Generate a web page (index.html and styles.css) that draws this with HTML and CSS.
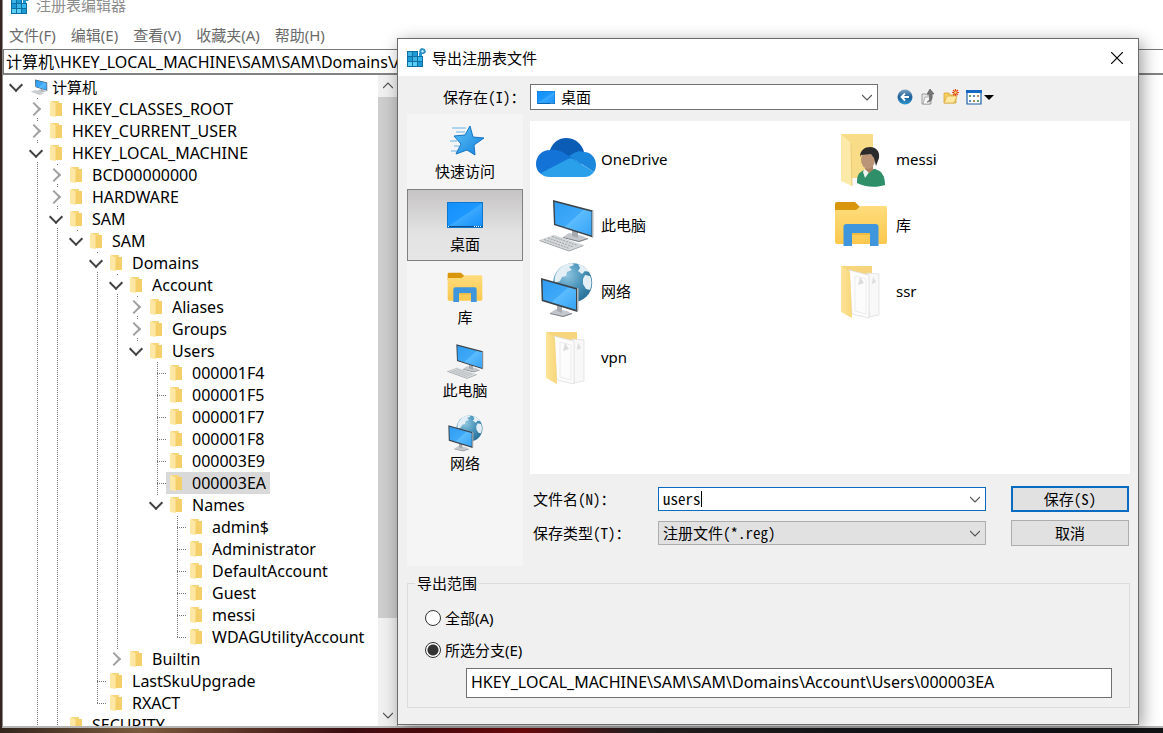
FILE: index.html
```html
<!DOCTYPE html>
<html lang="zh-CN">
<head>
<meta charset="UTF-8">
<title>注册表编辑器</title>
<link rel="stylesheet" href="styles.css">
</head>
<body>
<svg class="sprite" aria-hidden="true">
	<defs>
		<linearGradient id="g-screen" x1="0" y1="0" x2="1" y2="1">
			<stop offset="0" stop-color="#2f9df4"/>
			<stop offset=".5" stop-color="#3fa9f8"/>
			<stop offset=".52" stop-color="#5bbcff"/>
			<stop offset="1" stop-color="#36a3f5"/>
		</linearGradient>
		<linearGradient id="g-desk" x1="0" y1="0" x2="1" y2="1">
			<stop offset="0" stop-color="#1490fb"/>
			<stop offset=".5" stop-color="#1c98ff"/>
			<stop offset=".52" stop-color="#3aa8ff"/>
			<stop offset="1" stop-color="#1590fa"/>
		</linearGradient>
		<radialGradient id="g-globe" cx=".35" cy=".3" r=".8">
			<stop offset="0" stop-color="#8fc6e0"/>
			<stop offset=".5" stop-color="#4b94ba"/>
			<stop offset="1" stop-color="#246a92"/>
		</radialGradient>
		<linearGradient id="g-folder" x1="0" y1="0" x2="0" y2="1">
			<stop offset="0" stop-color="#ffdc7c"/>
			<stop offset="1" stop-color="#fcc84e"/>
		</linearGradient>
		<linearGradient id="g-flap" x1="0" y1="0" x2="1" y2="0">
			<stop offset="0" stop-color="#fde59c"/>
			<stop offset="1" stop-color="#f8d677"/>
		</linearGradient>
		<linearGradient id="g-star" x1="0" y1="0" x2="1" y2="1">
			<stop offset="0" stop-color="#5cc4f8"/>
			<stop offset="1" stop-color="#1480dc"/>
		</linearGradient>
		<linearGradient id="g-back" x1="0" y1="0" x2="0" y2="1">
			<stop offset="0" stop-color="#7fa6c4"/>
			<stop offset=".5" stop-color="#1d5f99"/>
			<stop offset="1" stop-color="#2f9ad0"/>
		</linearGradient>
	</defs>

	<symbol id="i-reg" viewBox="0 0 20 20">
		<path d="M1 3h16v16H1z" fill="#0f6fa0"/>
		<path d="M2 4h4v4H2zM7 9h4v4H7z" fill="#3fb4e4"/>
		<path d="M7 4h4v4H7zM2 9h4v4H2zM12 14h4v4h-4z" fill="#1c9ad6"/>
		<path d="M2 14h4v4H2zM7 14h4v4H7z" fill="#5ad0f6"/>
		<path d="M12 9h4v4h-4z" fill="#36b8ea"/>
		<path d="M12 2h5v6h-5z" fill="#fff"/>
		<path d="M13 5h3v3h-3z" fill="#1c9ad6"/>
		<path d="M16 0l3 1 1 3-2 2-3 0-2-2 1-3z" fill="#2c8fc2"/>
		<circle cx="16.500" cy="3.200" r="1.200" fill="#bfe8fa"/>
	</symbol>

	<symbol id="i-folder" viewBox="0 0 16 18">
		<path d="M1 1h8v2l3 0v13H1z" fill="#f7d679"/>
		<path d="M7 3h5v13H6z" fill="#f5d06a"/>
		<path d="M0 2l1-1 5 3v13l-6-1z" fill="#fde7a4"/>
		<path d="M6 4v12" stroke="#f0c558" stroke-width=".7"/>
	</symbol>

	<symbol id="i-computer" viewBox="0 0 60 60">
		<path d="M27 42l6-4 14 3 5 3-9 3z" fill="#c3c7cb"/>
		<path d="M27 42l16 4 9-3v1l-9 3-16-4z" fill="#777d83"/>
		<path d="M36 33h6v10l-6-2z" fill="#a7abaf"/>
		<path d="M17 5l40 10.400v27L18 30z" fill="#3b4248"/>
		<path d="M56 15.400l1.500.4v26l-1.500.6z" fill="#aeb3b7"/>
		<path d="M18.500 7L55.500 16.700v23.800L19.300 29z" fill="url(#g-screen)"/>
		<path d="M3.500 45L18 39.700 47.500 50 33 55.500z" fill="#d5d8da"/>
		<path d="M3.500 45L33 55.500 47.500 50v1L33 56.500 3.500 46z" fill="#9a9fa3"/>
		<path d="M8 44.500l25.500 9M12 43l25.500 9M16 41.500l25.500 9" stroke="#9ca1a5" stroke-width="1" stroke-dasharray="2 1" fill="none"/>
	</symbol>

	<symbol id="i-network" viewBox="0 0 60 60">
		<circle cx="36.700" cy="21.700" r="19.500" fill="url(#g-globe)"/>
		<path d="M21 11c4-6 10-9 15-9l2 2-5 2 3 3-5 2-1 4-4 1-2 4-5 2c-1-4 0-8 2-11zM42 3c4 1 9 4 11 8l-4-1-3 3-4-3 2-3zM49 14l5 1c2 4 2 9 0 14l-4-1-3-5 0-5z" fill="#e3eff4"/>
		<path d="M14 52l6-4 11 2 5 3-9 3z" fill="#c3c7cb"/>
		<path d="M14 52l13 3 9-3v1l-9 3-13-3z" fill="#777d83"/>
		<path d="M21 43h5v9l-5-2z" fill="#a7abaf"/>
		<path d="M5 17l36.500 10.300V51L5.700 40z" fill="#3b4248"/>
		<path d="M41 27l1.500.5V50l-1.500.8z" fill="#b4b8bb"/>
		<path d="M6.500 19L40 28.500v20.300L7.200 38.800z" fill="url(#g-screen)"/>
	</symbol>

	<symbol id="i-library" viewBox="0 0 60 60">
		<path d="M4 9a2 2 0 0 1 2-2h18l5 5-3 6H4z" fill="#d9960c"/>
		<path d="M4 15h21l5-4h24a2 2 0 0 1 2 2v34a2 2 0 0 1-2 2H6a2 2 0 0 1-2-2z" fill="url(#g-folder)"/>
		<path d="M12.500 51V32a3 3 0 0 1 3-3h29a3 3 0 0 1 3 3v19H39V38H21v13z" fill="#3f96dc"/>
		<path d="M21 38h18v2H21z" fill="#f0bb40"/>
	</symbol>

	<symbol id="i-docs" viewBox="0 0 60 60">
		<path d="M10 5h31v10H20z" fill="#f6d57c"/>
		<path d="M36 12l12 1v41l-10 2z" fill="#f8f8f8" stroke="#dcdcdc" stroke-width=".7"/>
		<path d="M18 9l20 5v43l-17-4z" fill="#fcfcfc" stroke="#d8d8d8" stroke-width=".7"/>
		<path d="M24 15l11 3v35l-11-3z" fill="none" stroke="#ececec"/>
		<path d="M29 16l4 6-6 2zM42 16l3 5-4 2z" fill="#dcdcdc"/>
		<path d="M10 5l9 6 2 46-11-6z" fill="url(#g-flap)"/>
	</symbol>

	<symbol id="i-user" viewBox="0 0 60 60">
		<path d="M10 5h32v46H20z" fill="#f9dc88"/>
		<path d="M21 49h8v7h-8z" fill="#f6f8f9"/>
		<path d="M10 5l10 9 1 43-11-5z" fill="#fde9a8"/>
		<path d="M20 14l1 43" stroke="#e8c469" stroke-width=".8"/>
		<path d="M26 54c0-7 1-11 8-13l10-1c7 2 10 7 10 16-9 3-21 2-28-2z" fill="#2f8f68"/>
		<path d="M32 43l2 6 5-7-2-2-4 1z" fill="#eef3f2"/>
		<path d="M34 36h8v5l-4 3-4-4z" fill="#a98262"/>
		<ellipse cx="37" cy="31" rx="7" ry="9" fill="#bb9577"/>
		<path d="M29 28c0-7 5-10 10-10 6 0 10 4 9 11l-3 8-2-8-3-4-10 1z" fill="#2b2b2b"/>
	</symbol>

	<symbol id="i-cloud" viewBox="0 0 60 60">
		<path d="M14 21C17 13 23 9 30 9c9 0 16 6 18 14L34 34z" fill="#0b5cb5"/>
		<path d="M14 21c6-1 11 1 14 3l18 11L10 47C4 46 0 41 0 35c0-8 6-14 14-14z" fill="#1373d6"/>
		<path d="M33 27l5-3c4-2 7-2 10-1 7 0 12 6 12 13 0 3-1 5-2 7z" fill="#1a86dc"/>
		<path d="M5 44l27-14c2-1 3-1 5 0l21 13c-2 3-6 5-10 5H14c-4 0-7-1-9-4z" fill="#2a9fea"/>
	</symbol>

	<symbol id="i-desktop" viewBox="0 0 36 26">
		<path d="M0 0h36v26H0z" fill="#0f76cf"/>
		<path d="M1 1h34v23H1z" fill="url(#g-desk)"/>
		<path d="M1 24h34v1H1z" fill="#0b4f90"/>
		<path d="M1 24.500h2M27 24.500h8" stroke="#fff" stroke-dasharray="1 1"/>
	</symbol>

	<symbol id="i-quick" viewBox="0 0 40 40">
		<path d="M7 6h14M11 10h9M5 19h7M9 24h5M6 29h7" stroke="#68b4e6" stroke-width="1"/>
		<path d="M25 4l3 11 11 1-10 7 1 10-8-5-11 4 5-10-7-8 11-1z" fill="url(#g-star)" stroke="#1474c4" stroke-width="1"/>
	</symbol>

	<symbol id="i-chevron" viewBox="0 0 10 10">
		<path d="M0 3l5 5 5-5" fill="none" stroke="currentColor" stroke-width="1.200"/>
	</symbol>
</svg>

<main class="editor">
	<header class="editor-title">
		<svg class="icon-20"><use href="#i-reg"/></svg>
		<span>注册表编辑器</span>
	</header>
	<nav class="menu">
		<a href="#file">文件(F)</a>
		<a href="#edit">编辑(E)</a>
		<a href="#view">查看(V)</a>
		<a href="#fav">收藏夹(A)</a>
		<a href="#help">帮助(H)</a>
	</nav>
	<input class="address" type="text" aria-label="地址" value="计算机\HKEY_LOCAL_MACHINE\SAM\SAM\Domains\Account\Users\000003EA">
	<div class="panes">
		<div class="tree-pane">
			<ul class="tree">
				<li>
					<div class="row"><i class="toggle open"></i><span class="node"><svg class="pc"><use href="#i-computer"/></svg>计算机</span></div>
					<ul>
						<li><div class="row"><i class="toggle"></i><span class="node"><svg><use href="#i-folder"/></svg>HKEY_CLASSES_ROOT</span></div></li>
						<li><div class="row"><i class="toggle"></i><span class="node"><svg><use href="#i-folder"/></svg>HKEY_CURRENT_USER</span></div></li>
						<li class="more">
							<div class="row"><i class="toggle open"></i><span class="node"><svg><use href="#i-folder"/></svg>HKEY_LOCAL_MACHINE</span></div>
							<ul>
								<li><div class="row"><i class="toggle"></i><span class="node"><svg><use href="#i-folder"/></svg>BCD00000000</span></div></li>
								<li><div class="row"><i class="toggle"></i><span class="node"><svg><use href="#i-folder"/></svg>HARDWARE</span></div></li>
								<li>
									<div class="row"><i class="toggle open"></i><span class="node"><svg><use href="#i-folder"/></svg>SAM</span></div>
									<ul>
										<li>
											<div class="row"><i class="toggle open"></i><span class="node"><svg><use href="#i-folder"/></svg>SAM</span></div>
											<ul>
												<li>
													<div class="row"><i class="toggle open"></i><span class="node"><svg><use href="#i-folder"/></svg>Domains</span></div>
													<ul>
														<li>
															<div class="row"><i class="toggle open"></i><span class="node"><svg><use href="#i-folder"/></svg>Account</span></div>
															<ul>
																<li><div class="row"><i class="toggle"></i><span class="node"><svg><use href="#i-folder"/></svg>Aliases</span></div></li>
																<li><div class="row"><i class="toggle"></i><span class="node"><svg><use href="#i-folder"/></svg>Groups</span></div></li>
																<li>
																	<div class="row"><i class="toggle open"></i><span class="node"><svg><use href="#i-folder"/></svg>Users</span></div>
																	<ul>
																		<li><div class="row"><i class="stub"></i><span class="node"><svg><use href="#i-folder"/></svg>000001F4</span></div></li>
																		<li><div class="row"><i class="stub"></i><span class="node"><svg><use href="#i-folder"/></svg>000001F5</span></div></li>
																		<li><div class="row"><i class="stub"></i><span class="node"><svg><use href="#i-folder"/></svg>000001F7</span></div></li>
																		<li><div class="row"><i class="stub"></i><span class="node"><svg><use href="#i-folder"/></svg>000001F8</span></div></li>
																		<li><div class="row"><i class="stub"></i><span class="node"><svg><use href="#i-folder"/></svg>000003E9</span></div></li>
																		<li><div class="row"><i class="stub"></i><span class="node selected"><svg><use href="#i-folder"/></svg>000003EA</span></div></li>
																		<li>
																			<div class="row"><i class="toggle open"></i><span class="node"><svg><use href="#i-folder"/></svg>Names</span></div>
																			<ul>
																				<li><div class="row"><i class="stub"></i><span class="node"><svg><use href="#i-folder"/></svg>admin$</span></div></li>
																				<li><div class="row"><i class="stub"></i><span class="node"><svg><use href="#i-folder"/></svg>Administrator</span></div></li>
																				<li><div class="row"><i class="stub"></i><span class="node"><svg><use href="#i-folder"/></svg>DefaultAccount</span></div></li>
																				<li><div class="row"><i class="stub"></i><span class="node"><svg><use href="#i-folder"/></svg>Guest</span></div></li>
																				<li><div class="row"><i class="stub"></i><span class="node"><svg><use href="#i-folder"/></svg>messi</span></div></li>
																				<li><div class="row"><i class="stub"></i><span class="node"><svg><use href="#i-folder"/></svg>WDAGUtilityAccount</span></div></li>
																			</ul>
																		</li>
																	</ul>
																</li>
															</ul>
														</li>
														<li><div class="row"><i class="toggle"></i><span class="node"><svg><use href="#i-folder"/></svg>Builtin</span></div></li>
													</ul>
												</li>
												<li><div class="row"><i class="stub"></i><span class="node"><svg><use href="#i-folder"/></svg>LastSkuUpgrade</span></div></li>
												<li><div class="row"><i class="stub"></i><span class="node"><svg><use href="#i-folder"/></svg>RXACT</span></div></li>
											</ul>
										</li>
									</ul>
								</li>
								<li class="more"><div class="row"><i></i><span class="node"><svg><use href="#i-folder"/></svg>SECURITY</span></div></li>
							</ul>
						</li>
					</ul>
				</li>
			</ul>
			<div class="scrollbar">
				<svg class="up"><use href="#i-chevron"/></svg>
				<div class="thumb"></div>
				<svg class="down"><use href="#i-chevron"/></svg>
			</div>
		</div>
		<div class="values"></div>
	</div>
</main>

<form class="dialog">
	<header class="dialog-title">
		<svg class="icon-20"><use href="#i-reg"/></svg>
		<span>导出注册表文件</span>
		<button type="button" class="close" aria-label="关闭">
			<svg viewBox="0 0 12 12"><path d="M0 0l12 12M12 0L0 12" stroke="#000" stroke-width="1.200"/></svg>
		</button>
	</header>

	<div class="dialog-body">
		<div class="look-in">
			<label class="song" for="folder">保存在(I)：</label>
			<div class="combo">
				<svg class="mini-desktop"><use href="#i-desktop"/></svg>
				<select id="folder"><option>桌面</option></select>
				<svg class="arrow"><use href="#i-chevron"/></svg>
			</div>
			<div class="tools">
				<button type="button" aria-label="后退">
					<svg viewBox="0 0 16 16"><circle cx="8" cy="8" r="7.500" fill="url(#g-back)"/><path d="M12 8H5M8 4.500L4.500 8 8 11.500" fill="none" stroke="#fff" stroke-width="1.800"/></svg>
				</button>
				<button type="button" aria-label="向上一级">
					<svg viewBox="0 0 16 16"><path d="M2 5h4l1 1h4v9H2z" fill="#e6e6e6" stroke="#8a8a8a" stroke-width=".8"/><path d="M3 15l2-7h6l-1 7z" fill="#f6f6f6" stroke="#999" stroke-width=".7"/><path d="M7 13c3-1 3-4 2-8H7l3-5 4 5h-2c1 5-1 8-5 8z" fill="#777" stroke="#444" stroke-width=".5"/></svg>
				</button>
				<button type="button" aria-label="新建文件夹">
					<svg viewBox="0 0 16 16"><path d="M1 4h5l1 2h6v8H1z" fill="#f6cf63" stroke="#d39b2a" stroke-width=".7"/><path d="M1 14l3-7h10l-3 7z" fill="#ffe9a3" stroke="#d9a63a" stroke-width=".7"/><path d="M12.500 0v7M9 3.500h7M10 1l5 5M15 1l-5 5" stroke="#e5461c" stroke-width="1.200"/><circle cx="12.500" cy="3.500" r="1.200" fill="#ffe066"/></svg>
				</button>
				<button type="button" class="view" aria-label="查看">
					<svg viewBox="0 0 28 16"><path d="M1 2h14v13H1z" fill="#fff" stroke="#1c5fa8" stroke-width="1.200"/><path d="M0 1h16v3H0z" fill="#1668c0"/><path d="M3 6h2v2H3zM11 11h2v2h-2z" fill="#6aa06a"/><path d="M7 6h2v2H7zM3 11h2v2H3z" fill="#5a86c0"/><path d="M11 6h2v2h-2zM7 11h2v2H7z" fill="#b08a5a"/><path d="M18 6h10l-5 5z" fill="#000"/></svg>
				</button>
			</div>
		</div>

		<div class="browse">
			<nav class="places">
				<button type="button"><svg><use href="#i-quick"/></svg>快速访问</button>
				<button type="button" class="current"><svg class="wide"><use href="#i-desktop"/></svg>桌面</button>
				<button type="button"><svg><use href="#i-library"/></svg>库</button>
				<button type="button"><svg><use href="#i-computer"/></svg>此电脑</button>
				<button type="button"><svg><use href="#i-network"/></svg>网络</button>
			</nav>
			<div class="content">
				<ul class="files">
					<li><svg><use href="#i-cloud"/></svg>OneDrive</li>
					<li><svg><use href="#i-user"/></svg>messi</li>
					<li><svg><use href="#i-computer"/></svg>此电脑</li>
					<li><svg><use href="#i-library"/></svg>库</li>
					<li><svg><use href="#i-network"/></svg>网络</li>
					<li><svg><use href="#i-docs"/></svg>ssr</li>
					<li><svg><use href="#i-docs"/></svg>vpn</li>
				</ul>
				<div class="fields song">
					<label for="name">文件名(N)：</label>
					<div class="combo focus">
						<input id="name" type="text" value="users"><span class="caret"></span>
						<svg class="arrow"><use href="#i-chevron"/></svg>
					</div>
					<button type="submit" class="btn primary">保存(S)</button>
					<label for="type">保存类型(T)：</label>
					<div class="combo gray">
						<select id="type"><option>注册文件(*.reg)</option></select>
						<svg class="arrow"><use href="#i-chevron"/></svg>
					</div>
					<button type="button" class="btn">取消</button>
				</div>
			</div>
		</div>

		<fieldset class="range">
			<legend>导出范围</legend>
			<label><input type="radio" name="range">全部(A)</label>
			<label><input type="radio" name="range" checked>所选分支(E)</label>
			<input class="branch" type="text" aria-label="所选分支" value="HKEY_LOCAL_MACHINE\SAM\SAM\Domains\Account\Users\000003EA">
		</fieldset>
	</div>
</form>
</body>
</html>
```

FILE: styles.css
```css
* {
	box-sizing: border-box;
}
body {
	margin: 0;
	height: 100vh;
	padding: 0 0 5px 2px;
	overflow: hidden;
	color: #000;
	font: 15px/22px "Noto Sans", "Noto Sans CJK SC", sans-serif;
	background: linear-gradient(90deg, #33251d, #7a5a3c 12%, #3a0d10 30%, #7d0b0e 45%, #2a2424 55%, #15171a 75%, #101214);
}
ul {
	margin: 0;
	padding: 0;
	list-style: none;
}
a {
	color: inherit;
	text-decoration: none;
}
input,
select,
button {
	margin: 0;
	padding: 0;
	border: 0;
	background: none;
	color: inherit;
	font: inherit;
	font-feature-settings: inherit;
	outline: none;
}
select {
	appearance: none;
}
svg {
	display: block;
	flex: none;
}
.sprite {
	position: absolute;
	width: 0;
	height: 0;
}
.icon-20 {
	width: 20px;
	height: 20px;
}

/* 主窗口 */
.editor {
	display: flex;
	flex-direction: column;
	height: 100%;
	background: #fff;
	border-left: 1px solid #8a8a8a;
	border-bottom: 2px solid #b5b5b5;
}
.editor-title {
	display: flex;
	align-items: center;
	gap: 6px;
	height: 9px;
	padding-left: 7px;
	color: #8c8c8c;
}
.menu {
	display: flex;
	gap: 15px;
	padding: 15px 6px 3px;
	color: #6a6a6a;
}
.address {
	height: 26px;
	padding: 0 2px 1px;
	border: 1px solid #777;
	border-bottom: 2px solid #828282;
	border-right: 0;
	background: #fff;
	font-size: 16px;
}
.panes {
	display: flex;
	flex: 1;
	min-height: 0;
}
.tree-pane {
	display: flex;
	width: 394px;
	overflow: hidden;
}
.values {
	flex: 1;
	border-left: 1px solid #999;
}

/* 树 */
.tree {
	flex: 1;
	padding: 1px 0 0 3px;
	font-size: 16px;
}
.tree > li > .row {
	font-size: 15px;
}
.tree ul {
	padding-left: 20px;
}
.tree ul li {
	background: repeating-linear-gradient(#777 0 1px, #fff 1px 2px) 11px 0 / 1px 100% no-repeat;
}
.tree ul li:last-child {
	background-size: 1px 11px;
}
.tree ul li.more {
	background-size: 1px 100%;
}
.row {
	display: flex;
	height: 22px;
}
.row i {
	flex: none;
	width: 20px;
}
.toggle {
	display: flex;
	align-items: center;
	justify-content: center;
	background: linear-gradient(#fff, #fff) center / 20px 18px no-repeat;
}
.toggle::before {
	content: "";
	width: 8px;
	height: 8px;
	border: solid #a0a0a0;
	border-width: 2px 2px 0 0;
	transform: translateX(-2px) rotate(45deg);
}
.toggle.open::before {
	border-color: #404040;
	transform: translateY(-2px) rotate(135deg);
}
.stub {
	background: repeating-linear-gradient(90deg, #fff 0 1px, #777 1px 2px) 10px 11px / 10px 1px no-repeat;
}
.node {
	display: flex;
	align-items: center;
	gap: 6px;
	padding: 0 4px;
	white-space: nowrap;
}
.node svg {
	width: 16px;
	height: 18px;
}
.node .pc {
	width: 18px;
	height: 18px;
	margin: 0 -2px 0 0;
}
.selected {
	background: #d9d9d9;
}
.scrollbar {
	display: flex;
	flex-direction: column;
	align-items: center;
	width: 19px;
	background: #f0f0f0;
	color: #505050;
}
.scrollbar svg {
	width: 10px;
	height: 10px;
	margin: 6px 0;
}
.scrollbar .up {
	transform: rotate(180deg);
}
.scrollbar .down {
	margin-top: auto;
}
.thumb {
	width: 100%;
	height: 80%;
	background: #cdcdcd;
}

/* 导出对话框 */
.dialog {
	position: absolute;
	top: 38px;
	left: 397px;
	right: 24px;
	border: 1px solid #6b6b6b;
	background: #f0f0f0;
	box-shadow: 3px 4px 16px rgba(0, 0, 0, .4);
}
.dialog-title {
	display: flex;
	align-items: center;
	gap: 6px;
	height: 37px;
	padding: 0 15px 0 8px;
	background: #fff;
}
.close {
	margin-left: auto;
}
.close svg {
	width: 12px;
	height: 12px;
}
.dialog-body {
	padding: 8px 8px 16px 9px;
}
.look-in {
	display: flex;
	align-items: center;
}
.song {
	font-family: "Noto Sans CJK SC", sans-serif;
	font-feature-settings: "hwid";
}
.look-in label {
	width: 123px;
	padding-left: 36px;
	white-space: nowrap;
}
.combo {
	display: flex;
	align-items: center;
	height: 26px;
	padding: 0 5px 0 4px;
	border: 1px solid #707070;
	background: #fff;
}
.look-in .combo {
	flex: 1;
	gap: 6px;
	padding-left: 6px;
}
.combo select {
	flex: 1;
	min-width: 0;
}
.combo input {
	field-sizing: content;
	min-width: 0;
}
.arrow {
	width: 10px;
	height: 10px;
	margin-left: auto;
	color: #555;
}
.mini-desktop {
	width: 18px;
	height: 13px;
}
.focus {
	border-color: #0a6cc0;
}
.gray {
	border-color: #adadad;
	background: #e1e1e1;
}
.caret {
	width: 1px;
	height: 16px;
	background: #000;
}
.tools {
	display: flex;
	gap: 7px;
	width: 252px;
	padding-left: 19px;
}
.tools svg {
	width: 16px;
	height: 16px;
}
.tools .view svg {
	width: 28px;
}
.browse {
	display: flex;
	gap: 7px;
	padding-top: 4px;
}
.places {
	width: 116px;
	padding-top: 2px;
	background: #f5f5f5;
}
.places button {
	display: flex;
	flex-direction: column;
	align-items: center;
	width: 100%;
	height: 73px;
	padding-top: 6px;
	line-height: 18px;
}
.places svg {
	width: 40px;
	height: 40px;
}
.places .wide {
	width: 36px;
}
.places .current {
	height: 72px;
	margin-bottom: 1px;
	border: 1px solid #808080;
	padding-top: 5px;
	background: linear-gradient(#c6c4c4, #e2e2e2 60%, #e6e6e6);
}
.content {
	flex: 1;
	min-width: 0;
	padding-top: 7px;
}
.files {
	display: grid;
	grid-template-columns: repeat(auto-fill, 295px);
	align-content: start;
	height: 353px;
	padding: 5px 0 0 6px;
	background: #fff;
}
.files li {
	display: flex;
	align-items: center;
	gap: 5px;
	height: 66px;
}
.files svg {
	width: 60px;
	height: 60px;
}
.fields {
	display: grid;
	grid-template-columns: 125px 1fr 118px;
	align-items: center;
	row-gap: 8px;
	padding: 12px 1px 20px 3px;
}
.fields .combo {
	height: 24px;
	margin-right: 25px;
}
.btn {
	height: 26px;
	border: 1px solid #adadad;
	background: #e1e1e1;
}
.primary {
	border: 2px solid #0a6cc0;
}
.range {
	display: flex;
	flex-direction: column;
	gap: 10px;
	margin: 6px 0 0;
	padding: 13px 17px 9px;
	border: 1px solid #dcdcdc;
}
.range legend {
	margin-left: -10px;
	padding: 0 2px;
}
.range label {
	display: flex;
	align-items: center;
	gap: 4px;
}
.range input[type="radio"] {
	appearance: none;
	width: 16px;
	height: 16px;
	border: 1px solid #333;
	border-radius: 50%;
	background: #fff;
}
.range input[type="radio"]:checked {
	background: radial-gradient(#333 0 5px, #fff 6px);
}
.branch {
	height: 30px;
	margin: -3px 0 0 41px;
	padding: 0 4px 2px;
	border: 1px solid #707070;
	background: #fff;
	font-size: 16px;
}
```
